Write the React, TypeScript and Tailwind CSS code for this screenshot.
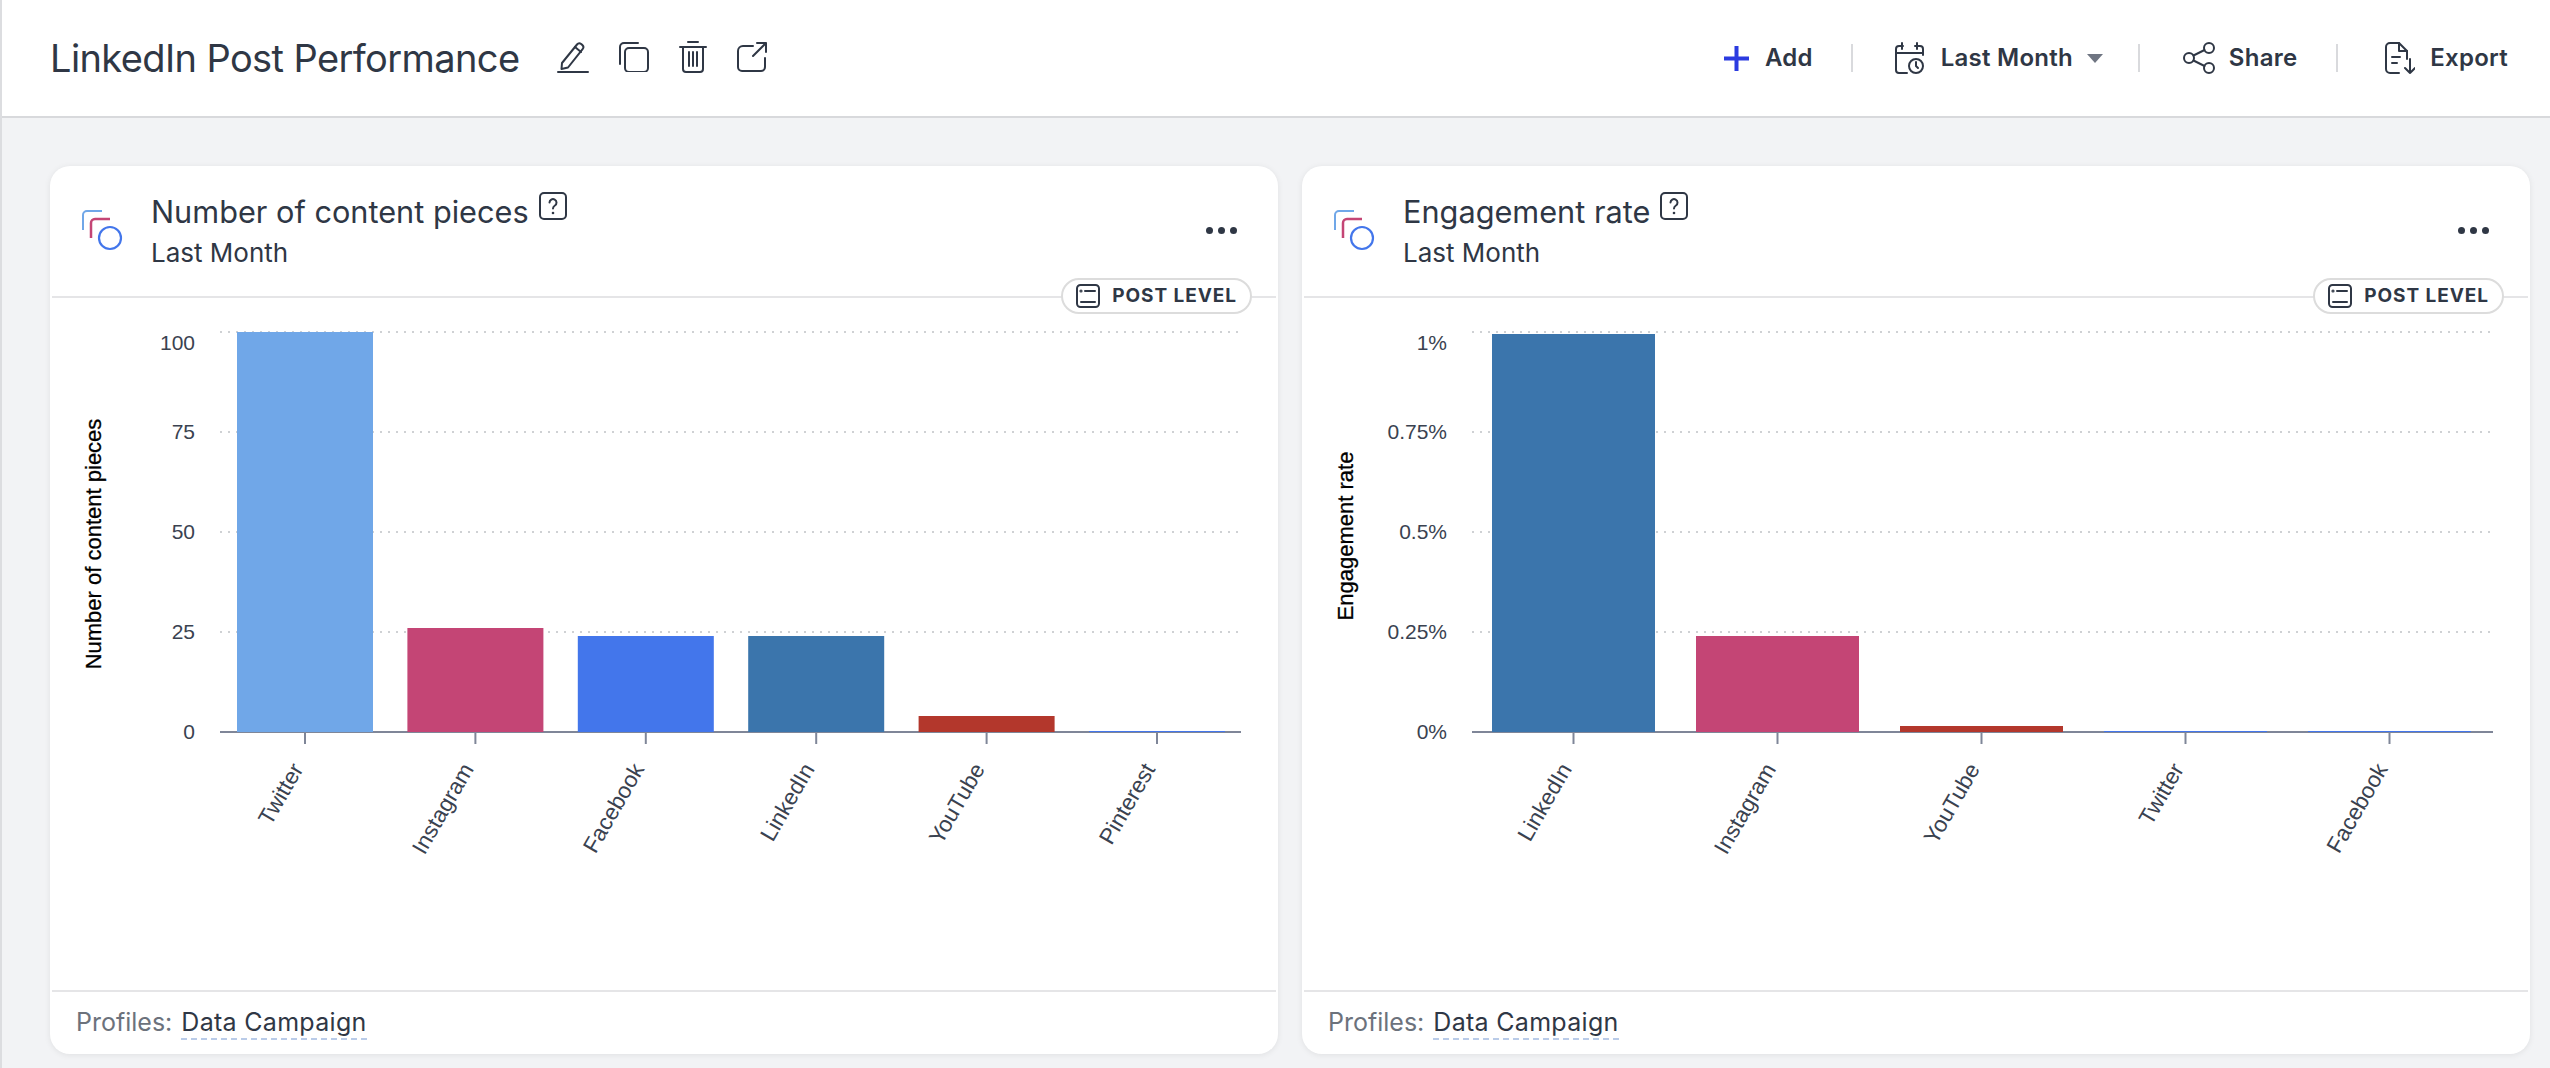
const BLUE_LIGHT = "#70a7e8";
const PINK = "#c44575";
const BLUE = "#4376eb";
const STEEL = "#3b75ac";
const RED = "#b3372c";

type Bar = { name: string; color: string; top: number };

const CHARTS = [
  {
    title: "Number of content pieces",
    ticks: ["100", "75", "50", "25", "0"],
    barWidth: 136,
    firstCenter: 255,
    step: 170.4,
    titleY: 246,
    bars: [
      { name: "Twitter", color: BLUE_LIGHT, top: 34 },
      { name: "Instagram", color: PINK, top: 330 },
      { name: "Facebook", color: BLUE, top: 338 },
      { name: "LinkedIn", color: STEEL, top: 338 },
      { name: "YouTube", color: RED, top: 418 },
      { name: "Pinterest", color: BLUE, top: 433 },
    ] as Bar[],
  },
  {
    title: "Engagement rate",
    ticks: ["1%", "0.75%", "0.5%", "0.25%", "0%"],
    barWidth: 163,
    firstCenter: 271.5,
    step: 204,
    titleY: 238,
    bars: [
      { name: "LinkedIn", color: STEEL, top: 36 },
      { name: "Instagram", color: PINK, top: 338 },
      { name: "YouTube", color: RED, top: 428 },
      { name: "Twitter", color: BLUE, top: 433 },
      { name: "Facebook", color: BLUE, top: 433 },
    ] as Bar[],
  },
];

function Icon({ w, h, children }: { w: number; h: number; children: React.ReactNode }) {
  return (
    <svg
      width={w}
      height={h}
      viewBox={`0 0 ${w} ${h}`}
      fill="none"
      stroke="currentColor"
      strokeWidth={2}
      strokeLinecap="round"
      strokeLinejoin="round"
      className="shrink-0"
    >
      {children}
    </svg>
  );
}

function Separator({ className }: { className: string }) {
  return <div className={`w-[2px] h-[28px] bg-[#d9dadd] ${className}`} />;
}

function Chart({ chart }: { chart: (typeof CHARTS)[number] }) {
  const axisY = 434;
  return (
    <svg
      width={1228}
      height={692}
      viewBox="0 0 1228 692"
      className="block [font-family:'Liberation_Sans',sans-serif]"
    >
      <text
        transform={`translate(51 ${chart.titleY}) rotate(-90)`}
        textAnchor="middle"
        fontSize={22}
        fill="#000"
        stroke="#000"
        strokeWidth={0.3}
      >
        {chart.title}
      </text>

      {[34, 134, 234, 334].map((y) => (
        <line
          key={y}
          x1={170}
          x2={1190}
          y1={y}
          y2={y}
          stroke="#cfd1d4"
          strokeWidth={2}
          strokeDasharray="2 6"
        />
      ))}

      {chart.ticks.map((t, i) => (
        <text
          key={t}
          x={145}
          y={i === 0 ? 52 : 34 + i * 100 + 7}
          textAnchor="end"
          fontSize={21}
          fill="#3a4250"
        >
          {t}
        </text>
      ))}

      <line x1={170} x2={1191} y1={axisY} y2={axisY} stroke="#7f8698" strokeWidth={2} />

      {chart.bars.map((b, i) => {
        const cx = chart.firstCenter + i * chart.step;
        return (
          <g key={b.name}>
            <rect
              x={cx - chart.barWidth / 2}
              y={b.top}
              width={chart.barWidth}
              height={axisY - b.top}
              fill={b.color}
            />
            <line x1={cx} x2={cx} y1={axisY} y2={axisY + 12} stroke="#7f8698" strokeWidth={2} />
            <text
              transform={`translate(${cx - 1} 471) rotate(-60)`}
              textAnchor="end"
              fontSize={22.5}
              fill="#3a4250"
            >
              {b.name}
            </text>
          </g>
        );
      })}
    </svg>
  );
}

function Card({ chart }: { chart: (typeof CHARTS)[number] }) {
  return (
    <div className="relative flex flex-col w-[1228px] h-[888px] bg-white rounded-[20px] shadow-[0_1px_6px_rgba(0,0,0,0.08)]">
      <div className="relative flex h-[132px] shrink-0 mx-[2px] border-b-2 border-[#e5e5e7]">
        <div className="mt-[44px] ml-[30px] mr-[25px] text-[#333c4a]">
          <svg width={44} height={44} viewBox="0 0 44 44" fill="none" strokeWidth={2}>
            <path d="M1 20V5a4 4 0 0 1 4-4h15" stroke={BLUE_LIGHT} />
            <path d="M9 28V13a4 4 0 0 1 4-4h15" stroke={PINK} strokeWidth={2.5} />
            <circle cx={28} cy={28} r={11} stroke={BLUE} strokeWidth={2.2} />
          </svg>
        </div>
        <div className="pt-[24px]">
          <div className="flex items-start gap-[10px]">
            <span className="text-[30.7px] leading-[44px] text-[#2f3745]">{chart.title}</span>
            <svg width={28} height={28} viewBox="0 0 28 28" fill="none" className="mt-[2px] text-[#2f3745]">
              <rect x={1} y={1} width={26} height={26} rx={4} stroke="currentColor" strokeWidth={2} />
              <path
                d="M10.500 10.500a3.500 3.500 0 1 1 5.400 3c-1.300.8-1.900 1.500-1.900 3"
                stroke="currentColor"
                strokeWidth={2}
                strokeLinecap="round"
              />
              <circle cx={14} cy={21} r={1.3} fill="currentColor" />
            </svg>
          </div>
          <div className="text-[26px] leading-[36px] mt-[1px] text-[#2f3745]">Last Month</div>
        </div>
        <div className="absolute right-[39px] top-[61px] flex gap-[5px]">
          <span className="w-[7px] h-[7px] rounded-full bg-[#2f3745]" />
          <span className="w-[7px] h-[7px] rounded-full bg-[#2f3745]" />
          <span className="w-[7px] h-[7px] rounded-full bg-[#2f3745]" />
        </div>
        <div className="absolute right-[24px] top-[112px] flex items-center gap-[12px] h-[36px] pl-[13px] pr-[13px] bg-white border-2 border-[#dcdcdc] rounded-full">
          <span className="text-[#2f3745]">
            <Icon w={24} h={24}>
              <rect x={1} y={1} width={22} height={22} rx={3.5} />
              <path d="M9 7h10M5 18h14" />
              <circle cx={5} cy={7} r={0.6} />
            </Icon>
          </span>
          <span className="text-[19px] font-bold tracking-[0.05em] text-[#2f3745] whitespace-nowrap">POST LEVEL</span>
        </div>
      </div>
      <div className="flex-1 min-h-0">
        <Chart chart={chart} />
      </div>
      <div className="flex items-center h-[64px] shrink-0 mx-[2px] pl-[24px] border-t-2 border-[#e5e5e7] text-[25px]">
        <span className="text-[#6c727c]">Profiles:</span>
        <span className="ml-[9px] text-[#2f3745] leading-[32px] tracking-[0.012em] border-b-2 border-dashed border-[#b9cbe8]">Data Campaign</span>
      </div>
    </div>
  );
}

export default function App() {
  return (
    <div className="h-screen overflow-hidden bg-[#f2f3f5] border-l-2 border-[#dcdde0] text-[#2f3745] [font-family:Inter,sans-serif]">
      <header className="flex items-center justify-between h-[118px] bg-white border-b-2 border-[#d8d9dc] pl-[48px] pr-[42px]">
        <div className="flex items-center">
          <h1 className="text-[38px] font-normal leading-none tracking-[-0.016em] whitespace-nowrap">LinkedIn Post Performance</h1>
          <div className="flex items-center ml-[38px] gap-[30px] mb-[2px]">
            <Icon w={32} h={32}>
              <path d="M5 22 20 3.500a3 3 0 0 1 4.200-.4l1 .8a3 3 0 0 1 .4 4.200L11 26.500l-6.500 1.500z" />
              <path d="m18 6 6 5M1 31h30" />
            </Icon>
            <Icon w={30} h={30}>
              <path d="M1 22V5a4 4 0 0 1 4-4h14" />
              <rect x={6} y={6} width={23} height={24} rx={4} />
            </Icon>
            <Icon w={28} h={32}>
              <path d="M1 6h26M9 1h10" />
              <path d="M4 6v22a3 3 0 0 0 3 3h14a3 3 0 0 0 3-3V6" />
              <path d="M10 11v14M14 11v14M18 11v14" />
            </Icon>
            <Icon w={30} h={30}>
              <path d="M16 4H6a5 5 0 0 0-5 5v16a4 4 0 0 0 4 4h19a4 4 0 0 0 4-4v-9" />
              <path d="M16 14 29 1M20 1h9v9" />
            </Icon>
          </div>
        </div>
        <div className="flex items-center text-[24px] font-semibold tracking-[0.01em] whitespace-nowrap">
          <svg width={25} height={25} viewBox="0 0 25 25" stroke="#2b3be0" strokeWidth={4} className="mr-[16px]">
            <path d="M12.500 0v25M0 12.500h25" />
          </svg>
          <span>Add</span>
          <Separator className="ml-[38px] mr-[42px]" />
          <Icon w={29} h={32}>
            <path d="M8 4H4a3 3 0 0 0-3 3v21a3 3 0 0 0 3 3h8" />
            <path d="M20 4h5a3 3 0 0 1 3 3v6M1 11h27M7 1v6M22 1v6" />
            <circle cx={21} cy={24} r={7} />
            <path d="M21 20v4l2 2" />
          </Icon>
          <span className="ml-[17px]">Last Month</span>
          <svg width={16} height={9} viewBox="0 0 16 9" className="ml-[14px] mr-[35px]">
            <path d="M0 0h16L8 9z" fill="#6f7582" />
          </svg>
          <Separator className="mr-[43px]" />
          <Icon w={32} h={32}>
            <circle cx={6} cy={16} r={5} />
            <circle cx={26} cy={6} r={5} />
            <circle cx={26} cy={26} r={5} />
            <path d="m10.500 13.500 11-5.500M10.500 18.500l11 5.500" />
          </Icon>
          <span className="ml-[14px]">Share</span>
          <Separator className="ml-[39px] mr-[47px]" />
          <Icon w={30} h={32}>
            <path d="M14 31H5a4 4 0 0 1-4-4V5a4 4 0 0 1 4-4h9l8 8v8" />
            <path d="M14 1v8h8M7 15h8M7 21h5M25 17v14M20 26l5 5 5-5" />
          </Icon>
          <span className="ml-[15px]">Export</span>
        </div>
      </header>
      <main className="flex gap-[24px] pl-[48px] pt-[48px]">
        {CHARTS.map((c) => (
          <Card key={c.title} chart={c} />
        ))}
      </main>
    </div>
  );
}
